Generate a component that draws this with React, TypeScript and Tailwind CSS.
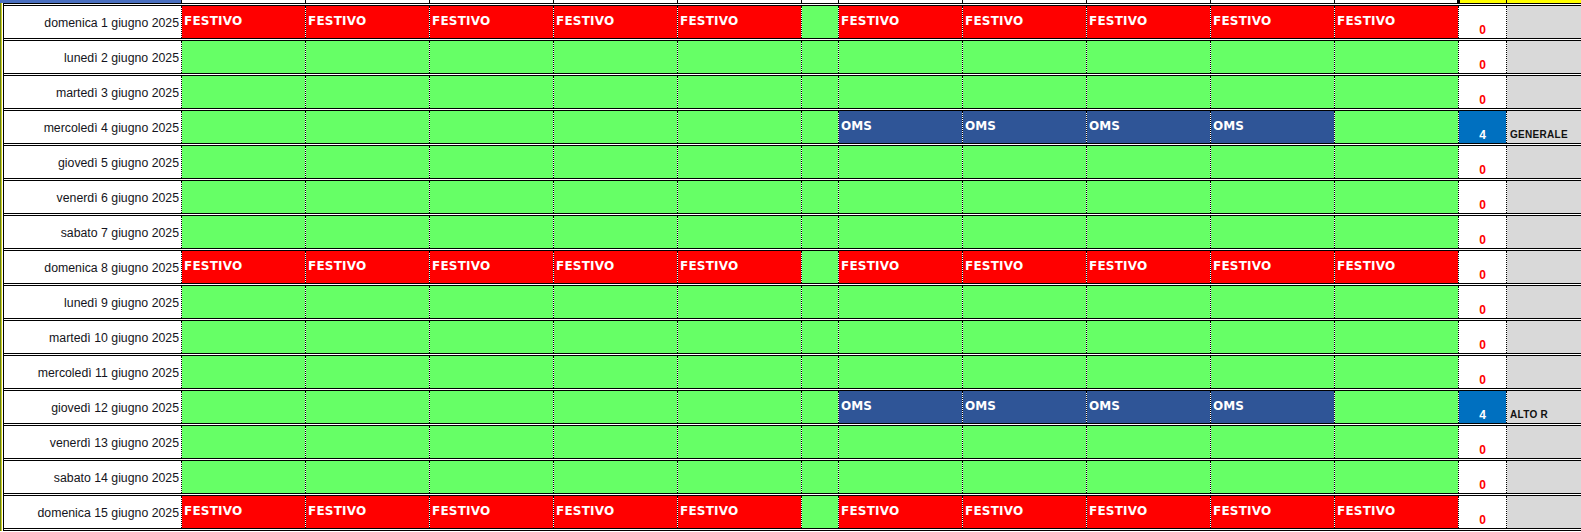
import React from 'react';

type Kind = 'F' | 'O' | 'N';

const rows: { label: string; kind: Kind; count: number; note?: string }[] = [
  { label: 'domenica 1 giugno 2025', kind: 'F', count: 0 },
  { label: 'lunedì 2 giugno 2025', kind: 'N', count: 0 },
  { label: 'martedì 3 giugno 2025', kind: 'N', count: 0 },
  { label: 'mercoledì 4 giugno 2025', kind: 'O', count: 4, note: 'GENERALE' },
  { label: 'giovedì 5 giugno 2025', kind: 'N', count: 0 },
  { label: 'venerdì 6 giugno 2025', kind: 'N', count: 0 },
  { label: 'sabato 7 giugno 2025', kind: 'N', count: 0 },
  { label: 'domenica 8 giugno 2025', kind: 'F', count: 0 },
  { label: 'lunedì 9 giugno 2025', kind: 'N', count: 0 },
  { label: 'martedì 10 giugno 2025', kind: 'N', count: 0 },
  { label: 'mercoledì 11 giugno 2025', kind: 'N', count: 0 },
  { label: 'giovedì 12 giugno 2025', kind: 'O', count: 4, note: 'ALTO R' },
  { label: 'venerdì 13 giugno 2025', kind: 'N', count: 0 },
  { label: 'sabato 14 giugno 2025', kind: 'N', count: 0 },
  { label: 'domenica 15 giugno 2025', kind: 'F', count: 0 },
];

const gridCols = 'grid grid-cols-[177px_repeat(5,124px)_37px_repeat(5,124px)_48px_1fr]';
const dotted = 'border-l border-dotted border-black bg-clip-padding';

// celle di un turno: rosso festivo, blu OMS, verde libero
const Shift = ({ type }: { type: 'F' | 'O' | 'N' }) => {
  if (type === 'F')
    return (
      <div className={`${dotted} bg-[#ff0000] pl-[2px] pt-[9px] text-white font-bold text-[12px] leading-[13px] tracking-[0.2px]`}>
        FESTIVO
      </div>
    );
  if (type === 'O')
    return (
      <div className={`${dotted} bg-[#2f5597] pl-[2px] pt-[9px] text-white font-bold text-[12px] leading-[13px]`}>
        OMS
      </div>
    );
  return <div className={`${dotted} bg-[#66ff66]`} />;
};

const Row = ({ row }: { row: (typeof rows)[number] }) => {
  const left: ('F' | 'O' | 'N')[] = row.kind === 'F' ? ['F', 'F', 'F', 'F', 'F'] : ['N', 'N', 'N', 'N', 'N'];
  const right: ('F' | 'O' | 'N')[] =
    row.kind === 'F' ? ['F', 'F', 'F', 'F', 'F'] : row.kind === 'O' ? ['O', 'O', 'O', 'O', 'N'] : ['N', 'N', 'N', 'N', 'N'];

  return (
    <div className={`${gridCols} h-[35px] border-t-[3px] border-double border-black bg-white`}>
      <div className="flex items-center justify-end pr-[2px] pt-[1px] text-[12.3px] leading-[14px] text-[#141420] font-['Liberation_Sans',sans-serif]">
        {row.label}
      </div>
      {left.map((t, i) => (
        <Shift key={'l' + i} type={t} />
      ))}
      <Shift type="N" />
      {right.map((t, i) => (
        <Shift key={'r' + i} type={t} />
      ))}
      <div
        className={`${dotted} flex items-end justify-center pb-[2px] text-[12px] leading-[12px] font-bold font-['Liberation_Sans',sans-serif] ${
          row.count > 0 ? 'bg-[#0070c0] text-white' : 'bg-white text-[#ff0000]'
        }`}
      >
        {row.count}
      </div>
      <div className={`${dotted} flex items-end bg-[#d9d9d9] pl-[3px] pb-[3px] text-[10px] leading-[10px] font-bold tracking-[0.3px] text-[#111] font-['Liberation_Sans',sans-serif]`}>
        {row.note}
      </div>
    </div>
  );
};

export default function App() {
  return (
    <div className="w-[1581px] h-[532px] overflow-hidden bg-white font-['DejaVu_Sans',sans-serif]">
      {/* striscia intestazione tagliata */}
      <div className="flex h-[3px]">
        <div className="w-[181px] bg-[#4a6fc0]" />
        <div className="w-[124px] border-l border-black" />
        <div className="w-[124px] border-l border-black" />
        <div className="w-[124px] border-l border-black" />
        <div className="w-[124px] border-l border-black" />
        <div className="w-[124px] border-l border-black" />
        <div className="w-[37px] border-l border-black" />
        <div className="w-[124px] border-l border-black" />
        <div className="w-[124px] border-l border-black" />
        <div className="w-[124px] border-l border-black" />
        <div className="w-[124px] border-l border-black" />
        <div className="w-[123px] border-l border-black" />
        <div className="w-[49px] border-l-[3px] border-black bg-[#ffff00]" />
        <div className="flex-1 border-l border-black bg-[#ffff00]" />
      </div>

      <div className="flex">
        <div className="w-[1px] bg-[#5f7a1f]" />
        <div className="w-[1px] bg-[#d2d21e]" />
        <div className="w-[1px] bg-white" />
        <div className="w-[1px] bg-black" />
        <div className="flex-1 border-b-[3px] border-double border-black">
          {rows.map((r) => (
            <Row key={r.label} row={r} />
          ))}
        </div>
      </div>
    </div>
  );
}
